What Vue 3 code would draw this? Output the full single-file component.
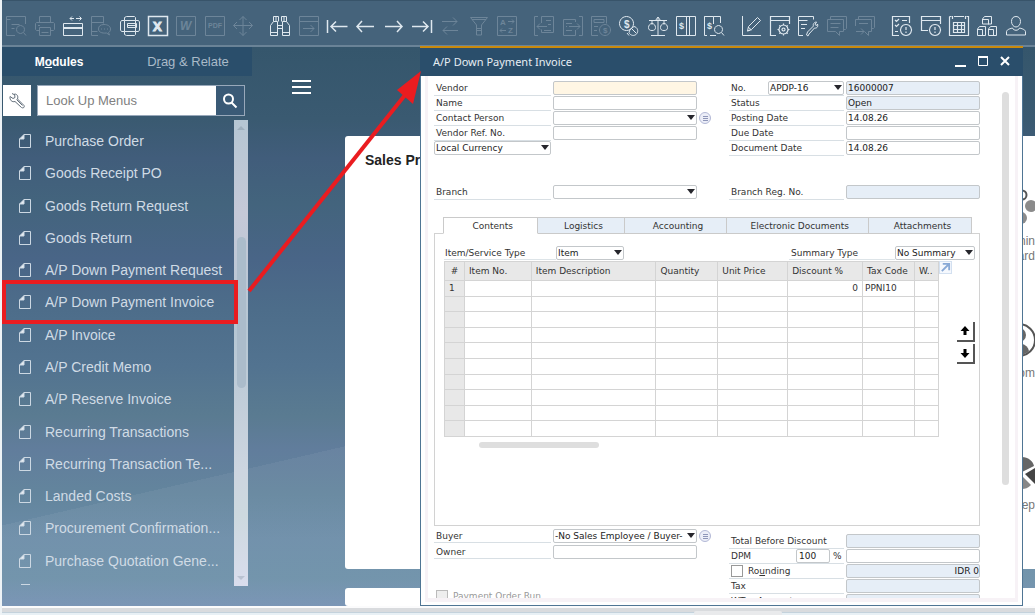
<script setup>
import { ref } from 'vue'

const toolGroups = [
  [
    { name: 'Print preview', dim: true, d: 'M9 19.5H.5V.5h19V8M.5 3.5h4M5.5 8.5h8M5.5 12.5h3M14.5 9.500a4 4 0 1 0 .01 0M17.500 16.500l2.500 3' },
    { name: 'Print', dim: true, d: 'M4.500 6.500v-6h11v6M4.500 14.500h-3l-1-1v-6l1-1h17l1 1v6l-1 1h-3M4.500 11.500h11v8h-11zM3 9.500h2M6.500 16.500h7' },
    { name: 'Fit window', d: 'M.5 19.500v-12h19v12zM.5 12.500h19M.5 11.500h19M7 2.500h4M13 2.500h5M9 .5l-2 2 2 2M16.500 .5l2 2-2 2' },
    { name: 'Send message', dim: true, d: 'M7 19.500H.5V.5h12v7M.5 6.500h12M.5 15.500h6M13 8.500c4 0 6.500 2 6.500 4.500 0 2-1 3-2 3.500l1 2.500-3-2c-5 .5-8-1-8-4s2-4.500 5.500-4.500zM10 13h1M13 13h1M16 13h1' },
    { name: 'Layout designer', d: 'M4.500 4.500v-3l2-1h8l1 1v3M4.500 15.500v3l2 1h8l1-1v-3M4.500 4.500h-3l-1 1.500v8l1 1.500h3M15.500 4.500h3l1 1.500v8l-1 1.500h-3M4.500 4.500h11v11h-11zM7.500 7.500h9v4h-9zM8 9.500h7' },
    { name: 'Export to Excel', d: 'M.5 .5h19v19H.5z', t: [[5, 15, 13, 'X']], strong: true, w: 1.500 },
    { name: 'Export to Word', dim: true, d: 'M.5 .5h19v19H.5z', t: [[4, 14, 12, 'W']], italic: true },
    { name: 'Export to PDF', dim: true, d: 'M.5 .5h19v19H.5z', t: [[3, 12, 7, 'PDF']] },
    { name: 'Move', dim: true, d: 'M10 .5v19M.5 9.500h19M6.500 4L10 .5 13.500 4M6.500 16l3.500 3.500 3.500-3.500M4 6L.5 9.500 4 13M16 6l3.500 3.500L16 13' },
  ],
  [
    { name: 'Find', d: 'M3.500 5.500v-5h5v5M11.500 5.500v-5h5v5M3.500 5.500l-3 4v10h7v-14zM12.500 5.500h4l3 4v10h-7zM8 9.500h4M8 12.500h4M6 1v4M14 1v4M.5 16.500h7M12.500 16.500h7' },
    { name: 'Add record', dim: true, d: 'M.5 .5h19v19H.5zM.5 5.500h19M4 12.500h11M11.500 9l3.500 3.500-3.500 3.500' },
    { name: 'First record', d: 'M.5 4v13M4 10.500h16.500M9 5.500l-5 5 5 5', w: 1.500 },
    { name: 'Previous record', d: 'M2 10.500h17M7 5l-5 5.500 5 5.500', w: 1.500 },
    { name: 'Next record', d: 'M1 10.500h17M13 5l5 5.500-5 5.500', w: 1.500 },
    { name: 'Last record', d: 'M19.500 4v13M0 10.500h16M11 5.500l5 5-5 5', w: 1.500 },
    { name: 'Refresh', dim: true, d: 'M2 5.500h15M13 1.500l4 4-4 4M18 14.500H3M7 10.500l-4 4 4 4' },
    { name: 'Filter', dim: true, d: 'M1.500 1.500h17l-6 7.500v10h-5V9zM3 3.500h14M7.500 12.500h5M7.500 14.500h5' },
    { name: 'Sort', dim: true, d: 'M.5 .5h19v19H.5zM11 5.500h6M15 3.500l2 2-2 2M9 14.500H3M5 12.500l-2 2 2 2', t: [[3, 9, 8, 'A'], [11, 17, 8, 'Z']] },
  ],
  [
    { name: 'Base document', dim: true, d: 'M4 .5H.5v19H4M7.500 7V.5h12v16h-12v-3M3 10.500h10M6 7.500l-3 3 3 3M12 4.500h5M14 8.500h3M10 14.500h7' },
    { name: 'Target document', dim: true, d: 'M16 .5h3.500v19H16M12.500 6V3.500H.5v16h12V14M6 10.500h11M14 7.500l3 3-3 3M3 7.500h6M3 14.500h6M3 10.500h1' },
    { name: 'Gross profit', dim: true, d: 'M7 19.500H.5V.5h15v7M3 3.500h10v3H3zM3 10.500h4M3 14.500h3M14 8.500a5.500 5.500 0 1 0 .01 0', t: [[12, 17, 8, '$']] },
    { name: 'Payment means', d: 'M7.500 .5a7 7 0 1 0 .01 0M15 10.500a4.500 4.500 0 1 1-5 6l1-3zM8 17l2 2.500M13 13l4 4', t: [[5, 11.500, 10, '$']] },
    { name: 'Volume and weight', d: 'M10 1v18M3 19.500h14M1 4.500h18M7.500 4.500L10 1l2.500 3.500M4 4.500v4M16 4.500v4M4 7.500c-2 0-3.500 2-3.500 4s1 3 3.500 3 3.500-1 3.500-3-1.500-4-3.500-4zM16 7.500c-2 0-3.500 2-3.500 4s1 3 3.500 3 3.500-1 3.500-3-1.500-4-3.500-4z' },
    { name: 'Transaction journal', d: 'M.5 .5h19v19H.5zM10.500 .5v19M13.500 .5v19', t: [[3, 13, 9, '$']] },
    { name: 'Journal preview', d: 'M3 19.500H.5V.5h4M9.500 5V.5h7V7M.5 .5h9M12 19.500H6M14.500 9.500a4 4 0 1 0 .01 0M17.500 16.500l2.500 3M9.500 5v3', t: [[3, 13, 9, '$']] },
  ],
  [
    { name: 'Edit layout', d: 'M.5 0v19.500H19M5.500 15l1-4.500L15.500 1.500l3 3-9 9zM6 11l3.500 3M5.500 15l3-1' },
    { name: 'Form settings', d: 'M6 19.500H.5V.5h19V8M.5 4.500h19M13.500 12a1.500 1.500 0 1 0 .01 0M13.500 7.500v2M13.500 17.500v2M7.500 13.500h2M17.500 13.500h2M9.300 9.300l1.500 1.500M16.200 16.200l1.500 1.500M17.700 9.300l-1.500 1.500M10.800 16.200l-1.500 1.500M13.500 9a4.500 4.500 0 1 0 .01 0', w: 1.200 },
    { name: 'User settings', d: 'M5 19.500H.5V.5h15v3M.5 4.500h9M3 8.500h6M3 12.500h4M8.500 19l1-3 6-6c-1-2 1-4 3-4l-1.500 2.500 1.500 1 1-1.500c1 3-1 4.500-3 4l-5.500 6-1 2z' },
    { name: 'Comments', dim: true, d: 'M3.500 3V.5h16v12l-1 1h-2M.5 3.500h16v12h-4v4l-4-4h-8zM3.500 7.500h10M3.500 11.500h8' },
    { name: 'Forward comment', dim: true, d: 'M3.500 3V.5h16v11l-1 1h-2M.5 10V3.500h16v12h-3v4l-4-4M4 7.500h9M1 15.500h8M6 12.500l3 3-3 3' },
  ],
  [
    { name: 'Approval list', d: 'M7 19.500H.5V.5h17V7M3 4l1.500 1.500L7 3M3 9l1.500 1.500L7 8M10 4.500h5M3 15.500h3M14 8.500a5.500 5.500 0 1 0 .01 0M14 11v3M14 15.500v1.500', w: 1.200 },
    { name: 'Alerts', d: 'M7 14.500H.5V.5h19V8M.5 4.500h19M14 8.500a5.500 5.500 0 1 0 .01 0M14 11v3M14 15.500v1.500', w: 1.200 },
    { name: 'Calendar', d: 'M.5 .5v19h19V.5h-2M.5 .5h2M5 .5h10M3.500 0v3M16.500 0v3M4.500 6.500h11v10h-11zM8.500 6.500v10M12.500 6.500v10M4.500 9.500h11M4.500 13.500h11', w: 1.200 },
    { name: 'Relationship map', d: 'M5.500 3l2-2.500h7V8h-9zM5.500 3.500h6v5M.5 13l2-2.500h6v9H.5zM.5 13.500h5v6M11.500 13l2-2.500h6v9h-8zM11.500 13.500h5v6' },
    { name: 'User', d: 'M10 .5c-3 0-4.500 2-4.500 5s2 5.500 4.500 5.500 4.500-2.500 4.500-5.500-1.500-5-4.500-5zM6.500 12c-4 1-6 2-6 4v3h19v-3c0-2-2-3-6-4M6.500 12c1 3 6 3 7 0' },
  ],
]

const menuItems = [
  'Purchase Order', 'Goods Receipt PO', 'Goods Return Request', 'Goods Return',
  'A/P Down Payment Request', 'A/P Down Payment Invoice', 'A/P Invoice', 'A/P Credit Memo',
  'A/P Reserve Invoice', 'Recurring Transactions', 'Recurring Transaction Te...', 'Landed Costs',
  'Procurement Confirmation...', 'Purchase Quotation Gene...',
]
const current = 'A/P Down Payment Invoice'
const tabs = ['Contents', 'Logistics', 'Accounting', 'Electronic Documents', 'Attachments']
const activeTab = ref('Contents')
const columns = ['#', 'Item No.', 'Item Description', 'Quantity', 'Unit Price', 'Discount %', 'Tax Code', 'W..']
const rows = [['1', '', '', '', '', '0', 'PPNI10', '']]
while (rows.length < 10) rows.push(columns.map(() => ''))
</script>

<template>
  <div class="app">
    <header class="toolbar">
      <template v-for="(group, g) in toolGroups" :key="g">
        <span v-if="g" class="tool-gap"></span>
        <button v-for="tool in group" :key="tool.name" type="button" class="tool" :class="{ dim: tool.dim }" :aria-label="tool.name">
          <svg viewBox="0 0 20 20" class="tool-icon">
            <path :d="tool.d" :stroke-width="tool.w || 1" />
            <text v-for="t in tool.t" :key="t[3]" :x="t[0]" :y="t[1]" :font-size="t[2]" :class="{ italic: tool.italic, strong: tool.strong }">{{ t[3] }}</text>
          </svg>
        </button>
      </template>
    </header>

    <div class="workspace">
      <aside class="sidebar">
        <nav class="side-tabs">
          <button type="button" class="side-tab on">M<u>o</u>dules</button>
          <button type="button" class="side-tab">D<u>r</u>ag &amp; Relate</button>
        </nav>
        <form class="search" @submit.prevent>
          <button type="button" class="wrench" aria-label="Menu settings">
            <svg viewBox="0 0 18 18"><path d="M2 4.500l3 2 2-1-.5-3.500C9 2 10.500 4 9.500 7l6.500 6.500c1 2-1 3-2.500 2L7 9.500C4 10.500 1.500 8 2 4.500zM6 2.500L4 1.500M8.500 7.500l6 6" /></svg>
          </button>
          <div class="lookup">
            <input type="text" placeholder="Look Up Menus" aria-label="Look Up Menus" />
            <button type="submit" aria-label="Search">
              <svg viewBox="0 0 18 18"><circle cx="7.500" cy="7" r="4.500" /><path d="M10.500 10.500l5 5" /></svg>
            </button>
          </div>
        </form>
        <div class="menu-area">
          <ul class="menu">
            <li v-for="item in menuItems" :key="item">
              <a href="#" :aria-current="item === current ? 'page' : null">
                <svg viewBox="0 0 12 16"><path d="M5 1.500h6.500v13H.5V6" /><path d="M.5 6l4.500-4.500V6z" class="fold" /></svg>{{ item }}
              </a>
            </li>
            <li class="more">
              <a href="#" aria-label="More"><svg viewBox="0 0 12 16"><path d="M2 .5h9" /></svg></a>
            </li>
          </ul>
          <div class="side-scroll">
            <i class="tri up"></i><span class="side-thumb"></span><i class="tri down"></i>
          </div>
          <span class="highlight"></span>
        </div>
      </aside>

      <main class="desktop">
        <div class="desk-head">
          <button type="button" class="burger" aria-label="Menu"><i></i><i></i><i></i></button>
        </div>
        <section class="card main-card">
          <h2>Sales Pr</h2>
          <div class="shortcuts">
            <svg class="org" viewBox="0 0 13 40"><circle cx="0" cy="7" r="4.500" class="ring" /><circle cx="9" cy="18" r="6" /><circle cx="-1" cy="30" r="6" /></svg>
            <p>nin<br />ard</p>
            <svg class="person" viewBox="0 0 13 40"><circle cx="-3" cy="20" r="16" class="ring" /><circle cx="-3" cy="15" r="7" /><path d="M-12 31c2-10 17-10 19 0-5 5-14 5-19 0z" /></svg>
            <p>om</p>
            <svg class="pie" viewBox="0 0 13 40"><path d="M0 5c6 0 11 4 12 9L0 20z" /><path d="M3 22l10-6v16z" class="dark" /><path d="M0 24l9 9c-3 3-6 4-9 4z" class="light" /></svg>
            <p>Rep</p>
          </div>
        </section>
        <section class="card next-card"></section>

        <section class="window">
          <header class="titlebar">
            <h1>A/P Down Payment Invoice</h1>
            <button type="button" class="win-btn" aria-label="Minimize"><svg viewBox="0 0 12 12"><path d="M0 11h11" /></svg></button>
            <button type="button" class="win-btn" aria-label="Maximize"><svg viewBox="0 0 12 12"><path d="M1.500 1.500h9v9h-9z" class="thin" /><path d="M1 2h10" /></svg></button>
            <button type="button" class="win-btn" aria-label="Close"><svg viewBox="0 0 12 12"><path d="M2 2l8 8M10 2l-8 8" /></svg></button>
          </header>
          <div class="frame">
            <div class="doc">
              <div class="cols head-cols">
                <div class="fields left">
                  <label for="vendor">Vendor</label><input id="vendor" class="cream" />
                  <label for="name">Name</label><input id="name" />
                  <label for="contact">Contact Person</label>
                  <span class="pick"><select id="contact"><option></option></select></span>
                  <button type="button" class="bubble" aria-label="Contact details"><i></i></button>
                  <label for="ref">Vendor Ref. No.</label><input id="ref" />
                  <span class="pick currency"><select aria-label="Currency"><option>Local Currency</option></select></span>
                </div>
                <div class="fields right">
                  <div class="split"><label for="docno">No.</label>
                    <span class="pick series"><select aria-label="Series"><option>APDP-16</option></select></span></div>
                  <input id="docno" class="blue" value="16000007" />
                  <label for="status">Status</label><input id="status" class="blue" value="Open" />
                  <label for="posting">Posting Date</label><input id="posting" value="14.08.26" />
                  <label for="due">Due Date</label><input id="due" />
                  <label for="docdate">Document Date</label><input id="docdate" value="14.08.26" />
                </div>
              </div>

              <div class="cols branch-cols">
                <div class="fields left">
                  <label for="branch">Branch</label>
                  <span class="pick"><select id="branch"><option></option></select></span>
                </div>
                <div class="fields right">
                  <label for="regno">Branch Reg. No.</label><input id="regno" class="blue" />
                </div>
              </div>

              <div class="tabs" role="tablist">
                <button v-for="t in tabs" :key="t" type="button" role="tab" :aria-selected="t === activeTab" :class="{ on: t === activeTab }" @click="activeTab = t">{{ t }}</button>
              </div>
              <div class="panel">
                <div class="type-row">
                  <label for="itemtype">Item/Service Type</label>
                  <span class="pick type"><select id="itemtype"><option>Item</option></select></span>
                  <label for="summary" class="summary">Summary Type</label>
                  <span class="pick sum"><select id="summary"><option>No Summary</option></select></span>
                </div>
                <div class="grid-row">
                  <table>
                    <colgroup><col v-for="(c, i) in columns" :key="c" :class="'c' + i" /></colgroup>
                    <thead><tr><th v-for="c in columns" :key="c">{{ c }}</th></tr></thead>
                    <tbody>
                      <tr v-for="(r, i) in rows" :key="i"><td v-for="(v, j) in r" :key="j">{{ v }}</td></tr>
                    </tbody>
                  </table>
                  <div class="grid-side">
                    <button type="button" class="expand" aria-label="Expand table"><svg viewBox="0 0 12 12"><path d="M2 10l7-7M3 2h7v7" /></svg></button>
                    <div class="movers">
                      <button type="button" aria-label="Move row up"><svg viewBox="0 0 10 10"><path d="M5 0l4.500 5H6.500v4h-3V5H.5z" /></svg></button>
                      <button type="button" aria-label="Move row down"><svg viewBox="0 0 10 10"><path d="M5 10L.5 5h3V1h3v4h3z" /></svg></button>
                    </div>
                  </div>
                </div>
                <div class="h-thumb"></div>
              </div>

              <div class="cols foot-cols">
                <div class="foot-left">
                  <div class="fields left">
                    <label for="buyer">Buyer</label>
                    <span class="pick"><select id="buyer"><option>-No Sales Employee / Buyer-</option></select></span>
                    <button type="button" class="bubble" aria-label="Buyer details"><i></i></button>
                    <label for="owner">Owner</label><input id="owner" />
                  </div>
                  <label class="check muted"><input type="checkbox" disabled />Payment Order Run</label>
                </div>
                <div class="fields right totals">
                  <label for="before">Total Before Discount</label><input id="before" class="blue" />
                  <div class="split"><label for="dpm">DPM</label><input id="dpm" class="pct" value="100" /><span class="sign">%</span></div>
                  <input aria-label="DPM amount" />
                  <label class="check"><input type="checkbox" /><span>Ro<u>u</u>nding</span></label>
                  <input class="blue num" aria-label="Rounding amount" value="IDR 0" />
                  <label for="tax">Tax</label><input id="tax" class="blue" />
                  <label for="wtax">WTax Amount</label><input id="wtax" class="blue" />
                </div>
              </div>
            </div>
            <div class="v-thumb"></div>
          </div>
        </section>
      </main>
    </div>

    <footer class="statusbar"><span></span></footer>

    <svg class="pointer" viewBox="0 0 180 230">
      <path d="M5 224L165 23" />
      <path d="M177 4L153 23L169 37z" class="tip" />
    </svg>
  </div>
</template>

<style>
body { background: #eef3f6; }
</style>

<style scoped>
.app {
  position: relative;
  display: flex;
  flex-direction: column;
  height: 100vh;
  padding-left: 2px;
  box-sizing: border-box;
  overflow: hidden;
  font-family: "Liberation Sans", Arial, sans-serif;
}
.app *, .app *::before, .app *::after { box-sizing: border-box; }
button { padding: 0; border: 0; background: none; color: inherit; font: inherit; }
a { color: inherit; text-decoration: none; }

.toolbar {
  display: grid;
  grid-template-columns: repeat(9, 1fr) 9px repeat(9, 1fr) 9px repeat(7, 1fr) 9px repeat(5, 1fr) 9px repeat(5, 1fr);
  flex: none;
  height: 47px;
  padding: 6px 5px 0 0;
  background: #45637b;
  border-top: 1px solid #38546a;
  border-bottom: 2px solid #6a8397;
}
.tool { display: grid; place-items: center; color: #dfe8ef; }
.tool.dim { color: #6d8599; }
.tool-icon { width: 20px; height: 20px; overflow: visible; }
.tool-icon path { fill: none; stroke: currentColor; }
.tool-icon text { fill: currentColor; font-family: "Liberation Sans", Arial, sans-serif; font-weight: bold; }
.tool-icon .italic { font-style: italic; }
.tool-icon .strong { stroke: currentColor; }

.workspace {
  display: flex;
  flex: 1;
  min-height: 0;
  background:
    linear-gradient(167deg, transparent 60%, rgba(255, 255, 255, .05) 60%),
    linear-gradient(#35566c 0, #3a5a71 13%, #415d7b 20%, #43647d 28%, #496587 38%, #4d6d8a 47%, #527390 57%, #5a7b91 66%, #617d9c 72%, #63859d 80%, #6b8ca8 88%, #6c8fa8 95%, #7490b2 100%);
}

.sidebar { display: flex; flex-direction: column; flex: none; width: 250px; }
.side-tabs { display: flex; flex: none; height: 29px; background: #2a4e6b; }
.side-tab { flex: 1; padding-left: 8px; color: #a9bac8; font-size: 13px; }
.side-tab.on { flex: none; width: 114px; padding: 0; color: #fff; font-size: 12px; font-weight: bold; }
.search { display: flex; flex: none; gap: 6px; height: 40px; padding: 9px 7px 0 1px; }
.wrench { display: grid; place-items: center; width: 28px; background: #fff; }
.wrench svg { width: 18px; height: 18px; fill: none; stroke: #64707c; }
.lookup { display: flex; flex: 1; border: 1px solid #98a8ba; }
.lookup input { flex: 1; min-width: 0; height: auto; padding: 0 8px; border: 0; border-radius: 0; font: 13px "Liberation Sans", Arial, sans-serif; }
.lookup input::placeholder { color: #808080; opacity: 1; }
.lookup button { display: grid; place-items: center; width: 28px; background: #3a5a76; }
.lookup svg { width: 18px; height: 18px; fill: none; stroke: #fff; stroke-width: 2; }

.menu-area { position: relative; display: flex; flex: 1; min-height: 0; padding: 4px 4px 20px 0; }
.menu {
  flex: 1;
  display: grid;
  grid-template-rows: repeat(14, minmax(0, 7fr)) minmax(0, 2fr);
  margin: 5px 0 0;
  padding: 0;
  list-style: none;
  overflow: hidden;
  color: #d0dbe5;
  font-size: 14px;
}
.menu a { display: flex; align-items: center; gap: 14px; height: 100%; padding-left: 17px; white-space: nowrap; }
.menu svg { flex: none; width: 12px; height: 16px; fill: none; stroke: #ccd8e3; stroke-width: 1; overflow: visible; }
.menu .fold { fill: #e8eef4; }
.menu .more a { align-items: flex-start; padding-top: 7px; }
.side-scroll { display: flex; flex-direction: column; align-items: center; width: 14px; padding: 6px 0; background: linear-gradient(#b5c6d3, #c5c9d8 20%, #b5c6d3 45%, #cdd5e0 75%, #cdd9df 85%, #d9dded); }
.side-thumb { width: 9px; height: 151px; margin: 107px 0 auto; border-radius: 5px; background: #abbccb; }
.tri { width: 0; height: 0; border: 4px solid transparent; }
.tri.up { border-top: 0; border-bottom-color: #9eafbd; }
.tri.down { border-bottom: 0; border-top-color: #b9c2d1; }
.highlight { position: absolute; left: 0; right: 14px; top: 164px; height: 44px; border: 4px solid #ea1c20; }

.desktop { position: relative; display: flex; flex-direction: column; flex: 1; min-width: 0; padding-left: 93px; }
.desk-head { flex: none; height: 89px; }
.burger { display: flex; flex-direction: column; gap: 4px; width: 19px; margin: 33px 0 0 -53px; }
.burger i { height: 2px; background: #fff; }
.card { background: #fff; border-radius: 3px 0 0 3px; }
.main-card { flex: 1; display: flex; justify-content: space-between; min-height: 0; margin-bottom: 19px; overflow: hidden; }
.main-card h2 { margin: 16px 0 0 20px; font-size: 14px; line-height: 16px; color: #222; }
.next-card { flex: none; height: 18px; }
.shortcuts { width: 24px; padding-top: 52px; text-align: right; }
.shortcuts svg { display: block; width: 13px; height: 40px; margin-left: auto; fill: #666; }
.shortcuts .org { fill: #8b8b8b; }
.shortcuts .ring { fill: none; stroke: #555; stroke-width: 2; }
.shortcuts .dark { fill: #444; }
.shortcuts .light { fill: #888; }
.shortcuts p { height: 38px; margin: 6px 0 48px; font-size: 12px; line-height: 15px; color: #777; white-space: nowrap; }

.window {
  position: absolute;
  left: 168px;
  right: 12px;
  top: -1px;
  bottom: 0;
  display: flex;
  flex-direction: column;
  border-top: 2px solid #c98a0c;
  background: #fff;
  color: #333;
  font: 9px/14px "DejaVu Sans", sans-serif;
}
.titlebar { display: flex; align-items: center; flex: none; gap: 10px; height: 28px; padding: 0 12px 2px 13px; background: #2a4e6b; color: #fff; }
.titlebar h1 { flex: 1; margin: 0; font: 11px "Noto Sans", sans-serif; color: #e6edf3; }
.win-btn { width: 12px; height: 12px; }
.win-btn svg { display: block; width: 12px; height: 12px; fill: none; stroke: #fff; stroke-width: 2; }
.win-btn .thin { stroke-width: 1; }
.frame { flex: 1; display: flex; min-height: 0; padding: 0 4px 3px; border: 1px solid #4f7594; border-top: 0; }
.doc { flex: 1; min-width: 0; padding: 5px 22px 0 6px; border: solid #f7f2f6; border-width: 0 0 4px 3px; overflow: hidden; }
.v-thumb { flex: none; width: 16px; border: solid #f7f2f6; border-width: 0 3px 4px 0; }
.v-thumb::before { content: ""; display: block; width: 7px; height: 393px; margin-top: 16px; border-radius: 4px; background: #dedede; }

.cols { display: flex; justify-content: space-between; }
.fields { display: grid; column-gap: 2px; color: #333; }
.fields.left { grid-template-columns: 117px 144px 13px; }
.fields.right { grid-template-columns: 115px 134px; }
.head-cols .fields { height: 74px; grid-template-rows: repeat(5, 1fr); }
.fields > label { grid-column: 1; padding-left: 2px; border-bottom: 1px solid #d8dfe4; white-space: nowrap; }
input, select { width: 100%; height: 14px; padding: 0 1px; border: 1px solid #c3c7ca; border-radius: 2px; outline: 0; background: #fff; color: #222; font: inherit; line-height: 12px; }
.blue { background: #e6eef7; }
.cream { background: #fff6e4; }
.num { text-align: right; padding: 0; }
.pick { position: relative; display: block; min-width: 0; }
.pick select { display: block; appearance: none; padding: 0 1px; }
.pick::after { content: ""; position: absolute; right: 2px; top: 4px; border: solid transparent; border-width: 5px 4px 0; border-top-color: #26262c; pointer-events: none; }
.currency { grid-column: 1; }
.split { display: flex; justify-content: space-between; border-bottom: 1px solid #d8dfe4; padding-left: 2px; }
.series { width: 76px; }
.bubble { display: grid; place-items: center; width: 12px; height: 12px; margin-top: 1px; border: 1px solid #b3b9d6; border-radius: 50%; background: #eceef8; }
.bubble i { width: 5px; height: 5px; border: solid #8e96b8; border-width: 1px 0; background: linear-gradient(transparent 1px, #8e96b8 1px, #8e96b8 2px, transparent 2px); }
.branch-cols { margin-top: 30px; }

.tabs { display: flex; height: 17px; margin: 17px 8px 0 9px; position: relative; }
.tabs button { flex: 87 1 0; padding-left: 5px; border: 1px solid #cacaca; border-left: 0; background: #e6eef7; color: #333; white-space: nowrap; }
.tabs button:nth-child(3) { flex-grow: 101; }
.tabs button:nth-child(4) { flex-grow: 145; }
.tabs button:nth-child(5) { flex-grow: 103; }
.tabs .on { flex-grow: 93; border-left: 1px solid #cacaca; border-bottom-color: #fff; background: #fff; }
.panel { height: 293px; margin-top: -1px; padding: 12px 4px 0 9px; border: 1px solid #d2d2d2; }
.type-row { display: flex; height: 14px; }
.type-row label { width: 112px; padding-left: 1px; border-bottom: 1px solid #dde4e8; white-space: nowrap; }
.type-row .summary { width: 106px; margin-left: auto; padding-left: 2px; }
.type { width: 68px; }
.sum { width: 80px; }
.grid-row { display: flex; margin-top: 1px; }
table { flex: 1; min-width: 0; height: 176px; border-collapse: collapse; table-layout: fixed; }
.c0 { width: 20px; }
.c1 { width: 67px; }
.c2 { width: 125px; }
.c3 { width: 62px; }
.c4 { width: 70px; }
.c5 { width: 75px; }
.c6 { width: 52px; }
.c7 { width: 24px; }
th, td { height: 15px; padding: 0 4px; border: 1px solid #d4d4d4; font-weight: normal; text-align: left; line-height: 12px; white-space: nowrap; }
th { height: 19px; background: #e8e8e8; }
th:first-child, td:first-child { background: #e8e8e8; }
th:first-child { text-align: center; }
td:nth-child(6) { text-align: right; }
td:nth-child(7) { padding-left: 2px; }
.grid-side { display: flex; flex-direction: column; justify-content: space-between; flex: none; width: 36px; padding-bottom: 73px; }
.expand { width: 13px; height: 13px; border: 1px solid #d3e0f0; background: #f5f8fd; }
.expand svg { display: block; width: 11px; height: 11px; fill: none; stroke: #88a9d6; stroke-width: 2; }
.movers { display: flex; flex-direction: column; gap: 2px; align-self: flex-end; }
.movers button { display: grid; place-items: center; width: 18px; height: 20px; border: solid #555; border-width: 0 2px 2px 0; }
.movers svg { width: 10px; height: 10px; }
.h-thumb { width: 120px; height: 6px; margin: 5px 0 0 35px; border-radius: 3px; background: #dedede; }

.foot-cols { margin-top: 3px; }
.foot-left .fields { grid-template-rows: 14px 14px; row-gap: 2px; }
.totals { height: 73px; margin-top: 5px; grid-template-rows: repeat(5, 1fr); }
.pct { width: 34px; margin-left: auto; padding-left: 2px; }
.sign { width: 14px; padding-left: 3px; }
.check { display: flex; align-items: center; gap: 5px; }
.check input { appearance: none; width: 12px; height: 12px; margin: 0; border: 1px solid #999; border-radius: 0; }
.muted { margin-top: 30px; padding-left: 2px; color: #999; }
.muted input { background: #eee; border-color: #bbb; }

.statusbar { flex: none; height: 9px; padding-top: 3px; border-top: 2px solid #fbfbfc; background: linear-gradient(#d9dbde 4px, #c4d2dc 4px, #c4d2dc 5px, #e8f0f5 5px); }
.statusbar span { display: block; width: 88px; height: 4px; margin-left: 67%; border-radius: 2px 2px 0 0; background: #e9eaec; }

.pointer { position: absolute; left: 244px; top: 67px; width: 180px; height: 230px; pointer-events: none; }
.pointer path { fill: none; stroke: #ea1c20; stroke-width: 4; }
.pointer .tip { fill: #ea1c20; stroke: none; }
</style>
